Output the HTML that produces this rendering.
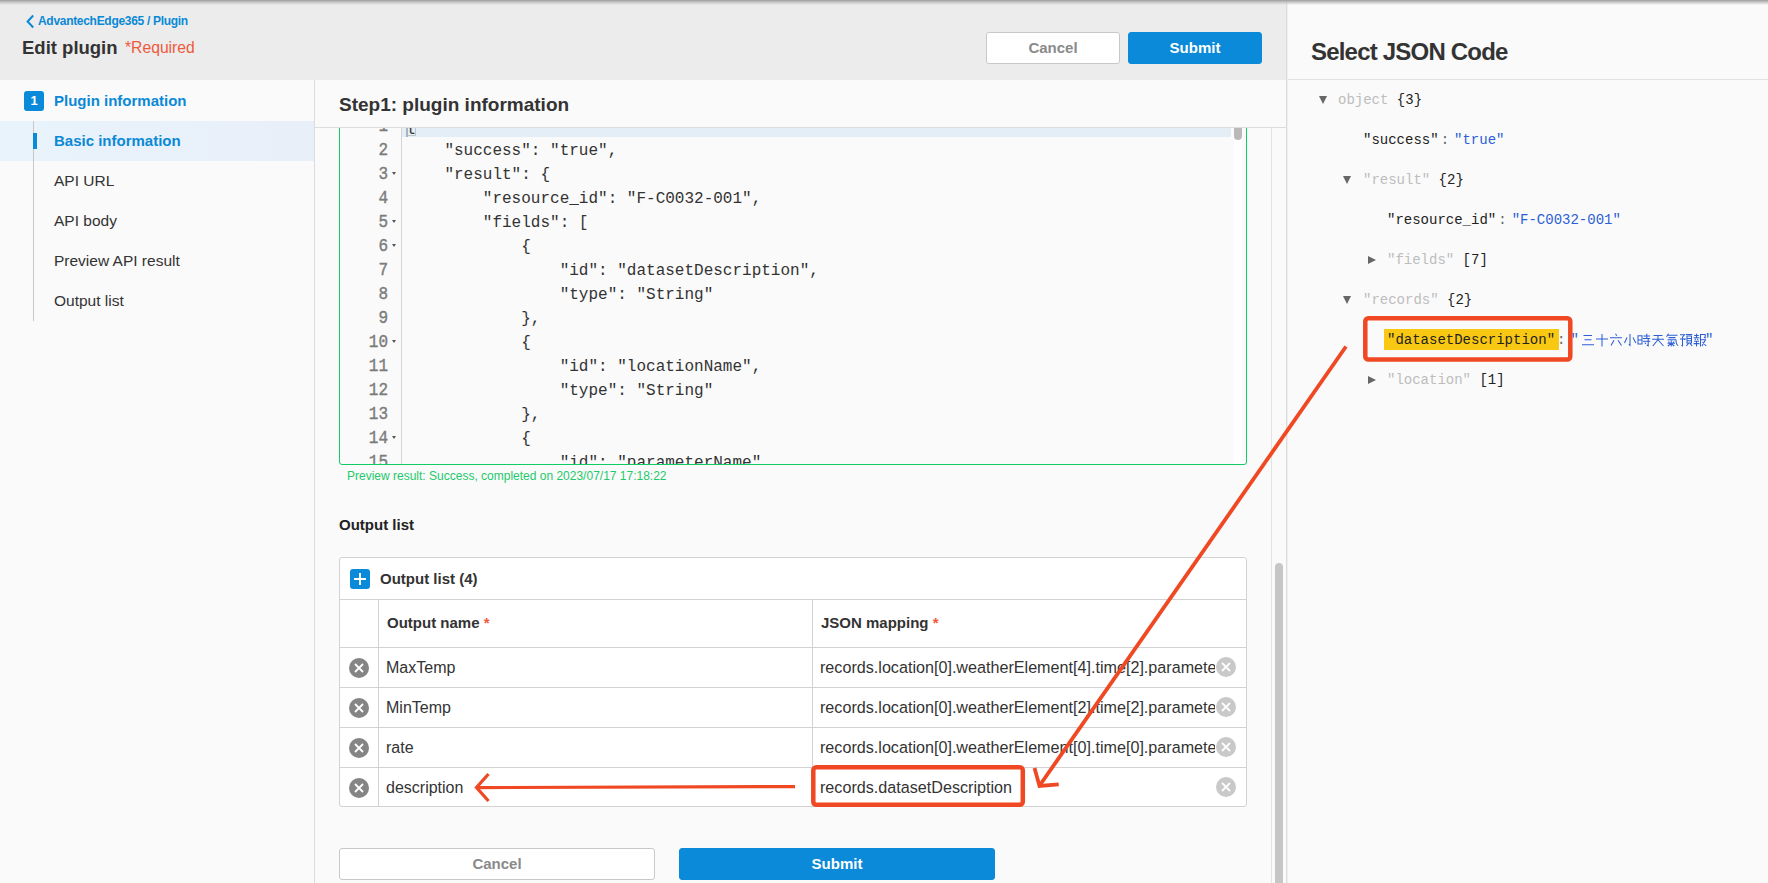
<!DOCTYPE html><html><head><meta charset="utf-8"><style>
*{box-sizing:border-box;margin:0;padding:0}
html,body{width:1768px;height:883px;overflow:hidden;background:#fafafa;font-family:"Liberation Sans",sans-serif;color:#333}
.a{position:absolute}
.nw{white-space:nowrap}
.mono{font-family:"Liberation Mono",monospace}
.btn{height:32px;border-radius:3px;font-size:15px;font-weight:bold;text-align:center;line-height:30px}
.bcancel{background:#fff;border:1px solid #c9c9c9;color:#8a8a8a}
.bsubmit{background:#0a8ad8;border:1px solid #0a8ad8;color:#fff}
.navi{position:absolute;left:54px;font-size:15.5px;color:#333;white-space:nowrap}
.ln{position:absolute;left:0;width:47px;text-align:right;color:#7c7c7c;font-size:16px;font-family:"Liberation Mono",monospace;transform:scaleY(1.18);transform-origin:0 14.5px;-webkit-text-stroke:0.35px #7c7c7c}
.cl{position:absolute;white-space:pre;color:#333;font-size:16px;font-family:"Liberation Mono",monospace}
.fold{position:absolute;left:51px;width:0;height:0;border-left:2.7px solid transparent;border-right:2.7px solid transparent;border-top:3.6px solid #555}
.tr{position:absolute;font-size:14px;white-space:pre;color:#222;font-family:"Liberation Mono",monospace}
.g{color:#bdbdbd}
.bl{color:#2c5fd6}
.co{color:#666;margin:0 5px 0 2px}
.cell{position:absolute;height:39px;font-size:16px;line-height:39px;white-space:nowrap;overflow:hidden;color:#333}
</style></head><body>
<div class="a" style="left:0;top:0;width:1286px;height:80px;background:#ececec"></div>
<svg class="a" style="left:25px;top:14px" width="10" height="15" viewBox="0 0 10 15"><path d="M8.2 1.5 L2.6 7.5 L8.2 13.5" fill="none" stroke="#0a89d6" stroke-width="2"/></svg>
<div class="a nw" style="left:38px;top:14px;font-size:12px;font-weight:bold;color:#0a89d6;letter-spacing:-0.3px">AdvantechEdge365 / Plugin</div>
<div class="a nw" style="left:22px;top:37px;font-size:18.5px;font-weight:bold;color:#333">Edit plugin</div>
<div class="a nw" style="left:125px;top:39px;font-size:15.7px;color:#ef5a3c">*Required</div>
<div class="a btn bcancel" style="left:986px;top:32px;width:134px">Cancel</div>
<div class="a btn bsubmit" style="left:1128px;top:32px;width:134px">Submit</div>
<div class="a" style="left:314px;top:80px;width:1px;height:803px;background:#dcdcdc"></div>
<div class="a" style="left:24px;top:91px;width:20px;height:20px;border-radius:3px;background:#0a8ad8;color:#fff;font-size:13px;font-weight:bold;text-align:center;line-height:20px">1</div>
<div class="a nw" style="left:54px;top:92px;font-size:15px;font-weight:bold;color:#0a89d6">Plugin information</div>
<div class="a" style="left:0;top:121px;width:314px;height:40px;background:linear-gradient(90deg,#e8f3fb,#e9eff9)"></div>
<div class="a" style="left:33px;top:121px;width:1px;height:200px;background:#c8c8c8"></div>
<div class="a" style="left:33px;top:133px;width:4px;height:16px;background:#0a8ad8"></div>
<div class="a nw" style="left:54px;top:132px;font-size:15px;font-weight:bold;color:#0a89d6">Basic information</div>
<div class="navi" style="top:172px">API URL</div>
<div class="navi" style="top:212px">API body</div>
<div class="navi" style="top:252px">Preview API result</div>
<div class="navi" style="top:292px">Output list</div>
<div class="a nw" style="left:339px;top:94px;font-size:19px;font-weight:bold;color:#333">Step1: plugin information</div>
<div class="a" style="left:315px;top:127px;width:971px;height:1px;background:#dcdcdc"></div>
<div class="a" style="left:1271px;top:128px;width:1px;height:755px;background:#e2e2e2"></div>
<div class="a" style="left:1275px;top:563px;width:8px;height:330px;border-radius:4px;background:#c6c6c6"></div>
<div class="a" style="left:315px;top:128px;width:956px;height:755px;overflow:hidden">
<div class="a" style="left:24px;top:-10px;width:908px;height:347px;border:1px solid #10cc65;border-radius:3px;overflow:hidden;background:#fafafa">
<div class="a" style="left:1px;top:9px;width:905px;height:336px;overflow:hidden">
<div class="a" style="left:60px;top:0;width:1px;height:400px;background:#d4d4d4"></div>
<div class="a" style="left:61px;top:0;width:829px;height:9px;background:#e3eef7"></div>
<div class="a" style="left:893px;top:0;width:8px;height:400px;background:#fff"></div>
<div class="a" style="left:893px;top:-4px;width:8px;height:16px;border-radius:0 0 4px 4px;background:#b9b9b9"></div>
<div class="a" style="left:65px;top:-6px;width:10px;height:14px;border:1px solid #c4c4c4;border-top:none"></div><div class="a" style="left:65px;top:-2px;width:2px;height:11px;background:#aab4bd"></div>
<div class="ln" style="top:-10px">1</div>
<div class="cl" style="left:65px;top:-10px">{</div>
<div class="ln" style="top:14px">2</div>
<div class="cl" style="left:65px;top:14px">    "success": "true",</div>
<div class="ln" style="top:38px">3</div>
<div class="fold" style="top:44px"></div>
<div class="cl" style="left:65px;top:38px">    "result": {</div>
<div class="ln" style="top:62px">4</div>
<div class="cl" style="left:65px;top:62px">        "resource_id": "F-C0032-001",</div>
<div class="ln" style="top:86px">5</div>
<div class="fold" style="top:92px"></div>
<div class="cl" style="left:65px;top:86px">        "fields": [</div>
<div class="ln" style="top:110px">6</div>
<div class="fold" style="top:116px"></div>
<div class="cl" style="left:65px;top:110px">            {</div>
<div class="ln" style="top:134px">7</div>
<div class="cl" style="left:65px;top:134px">                "id": "datasetDescription",</div>
<div class="ln" style="top:158px">8</div>
<div class="cl" style="left:65px;top:158px">                "type": "String"</div>
<div class="ln" style="top:182px">9</div>
<div class="cl" style="left:65px;top:182px">            },</div>
<div class="ln" style="top:206px">10</div>
<div class="fold" style="top:212px"></div>
<div class="cl" style="left:65px;top:206px">            {</div>
<div class="ln" style="top:230px">11</div>
<div class="cl" style="left:65px;top:230px">                "id": "locationName",</div>
<div class="ln" style="top:254px">12</div>
<div class="cl" style="left:65px;top:254px">                "type": "String"</div>
<div class="ln" style="top:278px">13</div>
<div class="cl" style="left:65px;top:278px">            },</div>
<div class="ln" style="top:302px">14</div>
<div class="fold" style="top:308px"></div>
<div class="cl" style="left:65px;top:302px">            {</div>
<div class="ln" style="top:326px">15</div>
<div class="cl" style="left:65px;top:326px">                "id": "parameterName",</div>
</div></div></div>
<div class="a nw" style="left:347px;top:469px;font-size:12px;color:#1dc96b">Preview result: Success, completed on 2023/07/17 17:18:22</div>
<div class="a nw" style="left:339px;top:516px;font-size:15px;font-weight:bold;color:#222">Output list</div>
<div class="a" style="left:339px;top:557px;width:908px;height:250px;border:1px solid #d2d2d2;border-radius:3px;background:#fff;overflow:hidden">
<div class="a" style="left:10px;top:11px;width:20px;height:20px;border-radius:3px;background:#0a8ad8"></div>
<div class="a" style="left:14px;top:20px;width:12px;height:2px;background:#fff"></div>
<div class="a" style="left:19px;top:15px;width:2px;height:12px;background:#fff"></div>
<div class="a nw" style="left:40px;top:12px;font-size:15px;font-weight:bold;color:#333">Output list (4)</div>
<div class="a" style="left:0;top:41px;width:908px;height:1px;background:#d2d2d2"></div>
<div class="a" style="left:38px;top:42px;width:1px;height:210px;background:#d2d2d2"></div>
<div class="a" style="left:472px;top:42px;width:1px;height:210px;background:#d2d2d2"></div>
<div class="a nw" style="left:47px;top:56px;font-size:15px;font-weight:bold;color:#333">Output name <span style="color:#ef5a3c">*</span></div>
<div class="a nw" style="left:481px;top:56px;font-size:15px;font-weight:bold;color:#333">JSON mapping <span style="color:#ef5a3c">*</span></div>
<div class="a" style="left:0;top:89px;width:908px;height:1px;background:#d2d2d2"></div>
<div class="a" style="left:9px;top:100px;width:20px;height:20px"><svg width="20" height="20" viewBox="0 0 20 20"><circle cx="10" cy="10" r="10" fill="#858585"/><path d="M6 6L14 14M14 6L6 14" stroke="#fff" stroke-width="1.8"/></svg></div>
<div class="cell" style="left:46px;top:90px;width:420px">MaxTemp</div>
<div class="cell" style="left:480px;top:90px;width:395px;font-size:16.15px">records.location[0].weatherElement[4].time[2].parameter.parameterName</div>
<div class="a" style="left:876px;top:99px;width:20px;height:20px"><svg width="20" height="20" viewBox="0 0 20 20"><circle cx="10" cy="10" r="10" fill="#c9c9c9"/><path d="M6 6L14 14M14 6L6 14" stroke="#fff" stroke-width="1.8"/></svg></div>
<div class="a" style="left:0;top:129px;width:908px;height:1px;background:#d2d2d2"></div>
<div class="a" style="left:9px;top:140px;width:20px;height:20px"><svg width="20" height="20" viewBox="0 0 20 20"><circle cx="10" cy="10" r="10" fill="#858585"/><path d="M6 6L14 14M14 6L6 14" stroke="#fff" stroke-width="1.8"/></svg></div>
<div class="cell" style="left:46px;top:130px;width:420px">MinTemp</div>
<div class="cell" style="left:480px;top:130px;width:395px;font-size:16.15px">records.location[0].weatherElement[2].time[2].parameter.parameterName</div>
<div class="a" style="left:876px;top:139px;width:20px;height:20px"><svg width="20" height="20" viewBox="0 0 20 20"><circle cx="10" cy="10" r="10" fill="#c9c9c9"/><path d="M6 6L14 14M14 6L6 14" stroke="#fff" stroke-width="1.8"/></svg></div>
<div class="a" style="left:0;top:169px;width:908px;height:1px;background:#d2d2d2"></div>
<div class="a" style="left:9px;top:180px;width:20px;height:20px"><svg width="20" height="20" viewBox="0 0 20 20"><circle cx="10" cy="10" r="10" fill="#858585"/><path d="M6 6L14 14M14 6L6 14" stroke="#fff" stroke-width="1.8"/></svg></div>
<div class="cell" style="left:46px;top:170px;width:420px">rate</div>
<div class="cell" style="left:480px;top:170px;width:395px;font-size:16.15px">records.location[0].weatherElement[0].time[0].parameter.parameterName</div>
<div class="a" style="left:876px;top:179px;width:20px;height:20px"><svg width="20" height="20" viewBox="0 0 20 20"><circle cx="10" cy="10" r="10" fill="#c9c9c9"/><path d="M6 6L14 14M14 6L6 14" stroke="#fff" stroke-width="1.8"/></svg></div>
<div class="a" style="left:0;top:209px;width:908px;height:1px;background:#d2d2d2"></div>
<div class="a" style="left:9px;top:220px;width:20px;height:20px"><svg width="20" height="20" viewBox="0 0 20 20"><circle cx="10" cy="10" r="10" fill="#858585"/><path d="M6 6L14 14M14 6L6 14" stroke="#fff" stroke-width="1.8"/></svg></div>
<div class="cell" style="left:46px;top:210px;width:420px">description</div>
<div class="cell" style="left:480px;top:210px;width:395px;font-size:16.15px">records.datasetDescription</div>
<div class="a" style="left:876px;top:219px;width:20px;height:20px"><svg width="20" height="20" viewBox="0 0 20 20"><circle cx="10" cy="10" r="10" fill="#c9c9c9"/><path d="M6 6L14 14M14 6L6 14" stroke="#fff" stroke-width="1.8"/></svg></div>
</div>
<div class="a btn bcancel" style="left:339px;top:848px;width:316px">Cancel</div>
<div class="a btn bsubmit" style="left:679px;top:848px;width:316px">Submit</div>
<div class="a" style="left:1286px;top:0;width:482px;height:883px;background:#fafafa"></div>
<div class="a" style="left:1286px;top:0;width:1px;height:883px;background:#dcdcdc"></div><div class="a" style="left:1287px;top:0;width:1px;height:883px;background:#efefef"></div>
<div class="a nw" style="left:1311px;top:38px;font-size:24px;font-weight:bold;color:#333;letter-spacing:-0.8px">Select JSON Code</div>
<div class="a" style="left:1288px;top:79px;width:480px;height:1px;background:#e2e2e2"></div>
<div class="a" style="left:1319px;top:96px;width:0;height:0;border-left:4.5px solid transparent;border-right:4.5px solid transparent;border-top:8px solid #666"></div><div class="tr" style="left:1338px;top:92px"><span class="g">object</span> {3}</div>
<div class="tr" style="left:1363px;top:132px">"success"<span class="co">:</span><span class="bl">"true"</span></div>
<div class="a" style="left:1343px;top:176px;width:0;height:0;border-left:4.5px solid transparent;border-right:4.5px solid transparent;border-top:8px solid #666"></div><div class="tr" style="left:1363px;top:172px"><span class="g">"result"</span> {2}</div>
<div class="tr" style="left:1387px;top:212px">"resource_id"<span class="co">:</span><span class="bl">"F-C0032-001"</span></div>
<div class="a" style="left:1368px;top:256px;width:0;height:0;border-top:4.5px solid transparent;border-bottom:4.5px solid transparent;border-left:8px solid #666"></div><div class="tr" style="left:1387px;top:252px"><span class="g">"fields"</span> [7]</div>
<div class="a" style="left:1343px;top:296px;width:0;height:0;border-left:4.5px solid transparent;border-right:4.5px solid transparent;border-top:8px solid #666"></div><div class="tr" style="left:1363px;top:292px"><span class="g">"records"</span> {2}</div>
<div class="a" style="left:1384px;top:329px;width:175px;height:21px;background:#f9c813"></div>
<div class="tr" style="left:1387px;top:332px">"datasetDescription"<span class="co">:</span><span class="bl">"</span></div>
<div class="a" style="left:1368px;top:376px;width:0;height:0;border-top:4.5px solid transparent;border-bottom:4.5px solid transparent;border-left:8px solid #666"></div><div class="tr" style="left:1387px;top:372px"><span class="g">"location"</span> [1]</div>
<svg class="a" style="left:1581px;top:333px" width="140" height="14" viewBox="0 0 140 14"><g fill="none" stroke="#2c5fd6" stroke-width="1.05"><path transform="translate(0,0)" d="M2.5 2.5H11 M3.5 6.8H10.5 M1 11.8H13"/><path transform="translate(14,0)" d="M1 6H13 M7 1V13.5"/><path transform="translate(28,0)" d="M6.5 0.8L7.8 2.8 M1 4.8H13 M5 7.3L2 12.5 M9 7.3L12.5 12.5"/><path transform="translate(42,0)" d="M7 1V12.3L5.8 11.3 M4 4.5L1.5 10 M10 4.5L12.8 10"/><path transform="translate(56,0)" d="M1 2.8H5V11H1Z M1 6.9H5 M6.5 3H13 M9.8 0.8V5.5 M6 5.5H13.2 M6 8.3H13.2 M11.2 5.8V12.8L9.8 12 M7.8 9.5L8.8 11"/><path transform="translate(70,0)" d="M2.5 2.5H11.5 M1 6.3H13 M7 2.5V6.5L1.8 13 M7.2 7L12.5 13"/><path transform="translate(84,0)" d="M3.5 0.8L1.5 3.8 M3 2.3H12.5 M3.5 4.6H10.5 M2.5 6.8H11 M11 6.8Q11 12 13.2 12.5 M3.5 8.5L4.5 10 M9 8.5L8 10 M2.5 10.2H10 M6.2 7.5V13.5 M6.2 10.5L2.8 13 M6.2 10.5L9.2 13"/><path transform="translate(98,0)" d="M1 1.8H5.5L3.2 4.5 M1 6H6.2L5.4 7 M3.5 4.5V12.8L2.5 12.2 M7 1.5H13.2 M8 3H12.5V10H8Z M8 5.4H12.5 M8 7.7H12.5 M9.5 10.3L7.3 13 M11 10.3L13.2 13"/><path transform="translate(112,0)" d="M1.2 2.5H5.8 M3.5 0.8V4.8 M0.6 4.8H6.4 M2 5.8L2.6 7 M5 5.8L4.4 7 M1 8.2H6 M0.6 10.6H6.4 M3.5 8.2V13.5 M7.5 1V13.5 M7.5 1.5H12.2V4.8L11 4.2 M8 6.8H12.5L9 13 M9.5 9L13.2 13"/></g></svg>
<div class="tr" style="left:1705px;top:332px"><span class="bl">"</span></div>
<div class="a" style="left:0;top:0;width:1768px;height:5px;background:linear-gradient(#9c9c9c,#c4c4c4 40%,rgba(236,236,236,0));z-index:50"></div>
<svg class="a" style="left:0;top:0;z-index:40" width="1768" height="883" viewBox="0 0 1768 883">
 <g fill="none" stroke="#ef4823">
  <rect x="813.3" y="767.3" width="209.5" height="37.5" rx="3" stroke-width="4.5"/>
  <rect x="1365.3" y="318.3" width="205" height="41.3" rx="3" stroke-width="4.5"/>
  <path d="M795 786.6 L478 787.6" stroke-width="3.2"/>
  <path d="M488.5 774 L476.5 787.5 L488.5 801" stroke-width="3.2"/>
  <path d="M1346 346.5 L1040 785" stroke-width="3.8"/>
  <path d="M1034.5 768 L1039.5 786 L1058.7 784.4" stroke-width="3.8"/>
 </g>
</svg>
</body></html>
